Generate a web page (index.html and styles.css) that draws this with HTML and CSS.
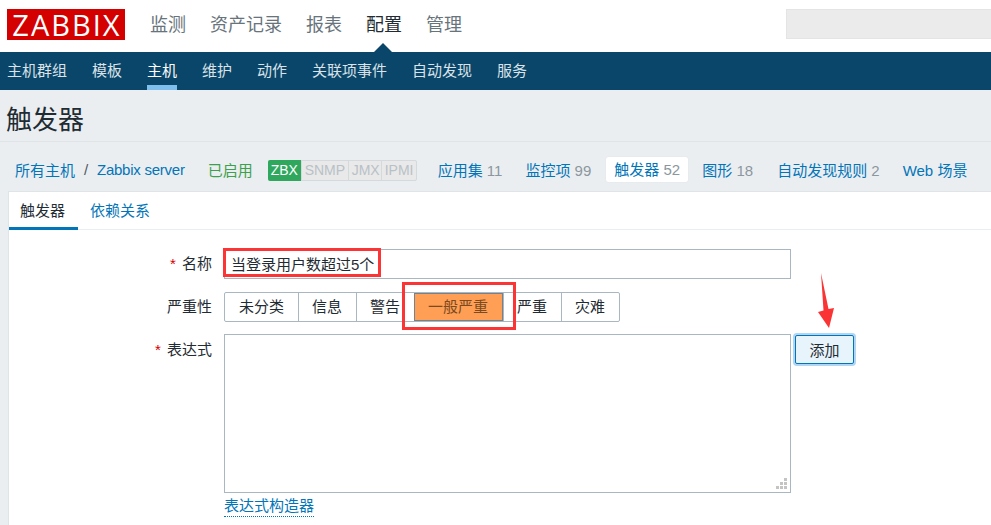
FILE: index.html
```html
<!DOCTYPE html>
<html lang="zh-CN">
<head>
<meta charset="utf-8">
<title>触发器</title>
<link rel="stylesheet" href="styles.css">
</head>
<body>
<header class="topbar">
  <a class="logo">ZABBIX</a>
  <nav class="mainnav">
    <a>监测</a><a>资产记录</a><a>报表</a><a class="is-current">配置</a><a>管理</a>
  </nav>
  <div class="search"></div>
</header>
<nav class="subnav">
  <a>主机群组</a><a>模板</a><a class="is-current">主机</a><a>维护</a><a>动作</a><a>关联项事件</a><a>自动发现</a><a>服务</a>
</nav>
<main class="page">
  <h1 class="title">触发器</h1>
  <div class="hostbar">
    <a class="link crumb">所有主机</a><span class="slash">/</span><a class="link crumb-host">Zabbix server</a>
    <span class="enabled">已启用</span>
    <span class="pills"><b class="pill pill-on">ZBX</b><b class="pill">SNMP</b><b class="pill">JMX</b><b class="pill">IPMI</b></span>
    <a class="link item item-apps">应用集 <i>11</i></a>
    <a class="link item item-items">监控项 <i>99</i></a>
    <a class="link item item-current">触发器 <i>52</i></a>
    <a class="link item item-graphs">图形 <i>18</i></a>
    <a class="link item item-rules">自动发现规则 <i>2</i></a>
    <a class="link item item-web">Web 场景</a>
  </div>
  <section class="panel">
    <div class="tabs">
      <a class="tab tab-on">触发器</a><a class="tab link">依赖关系</a>
    </div>
    <form class="form">
      <label class="label"><em>*</em> 名称</label>
      <div class="field name-field">当登录用户数超过5个</div>
      <label class="label">严重性</label>
      <div class="severity">
        <span class="sev">未分类</span><span class="sev">信息</span><span class="sev">警告</span><span class="sev sev-on">一般严重</span><span class="sev">严重</span><span class="sev">灾难</span>
      </div>
      <label class="label label-expr"><em>*</em> 表达式</label>
      <div class="expr-row">
        <div class="expr-col">
          <div class="field expr-box">
            <svg class="grip" width="12" height="12" viewBox="0 0 12 12"><path fill="#c4c4c4" d="M8 0h3v3H8zM8 4h3v3H8zM4 4h3v3H4zM8 8h3v3H8zM4 8h3v3H4zM0 8h3v3H0z"/></svg>
          </div>
          <a class="builder">表达式构造器</a>
        </div>
        <button class="add" type="button">添加</button>
      </div>
    </form>
  </section>
</main>
<!-- red callouts drawn on top of the form -->
<div class="mark mark-name"></div>
<div class="mark mark-sev"></div>
<svg class="arrow" width="20" height="58" viewBox="0 0 20 58"><path fill="#fa3434" d="M4 0 11.500 36 17 35 12 55 1 39 6.500 37.500Z"/></svg>
</body>
</html>
```
FILE: styles.css
```css
* { box-sizing: border-box; }
html, body { margin: 0; height: 525px; overflow: hidden; }
body {
  position: relative;
  background: #fff;
  font-family: "Liberation Sans", "Noto Sans CJK SC", sans-serif;
  font-size: 15px;
  color: #1f2c33;
}
a { text-decoration: none; }

.topbar { height: 52px; display: flex; align-items: flex-start; background: #fff; }
.logo {
  margin: 9px 0 0 7px;
  padding-left: 2px;
  width: 118px; height: 31px;
  background: #d40000; color: #fff;
  font: 400 29px/31px "Open Sans", sans-serif;
  text-align: center;
  letter-spacing: 2px;
}
.mainnav { display: flex; gap: 24px; margin: 14px 0 0 25px; font-size: 18px; line-height: 22px; color: #68747c; }
.mainnav .is-current { position: relative; color: #1f2c33; }
.mainnav .is-current::after {
  content: ""; position: absolute; left: 8px; top: 29px;
  border: 9px solid transparent; border-top: 0; border-bottom-color: #0a466a;
}
.search { margin: 9px 0 0 auto; width: 205px; height: 30px; background: #ebebeb; border: 1px solid #e4e4e4; border-right: 0; }

.subnav { height: 38px; display: flex; gap: 25px; padding-left: 7px; background: #0a466a; color: #dbe3e8; line-height: 38px; }
.subnav a { height: 38px; }
.subnav .is-current { color: #fff; border-bottom: 5px solid #7ebfed; }

.page { background: #ebeef1; height: 435px; }
.title { margin: 0; padding: 14px 0 0 6px; height: 52px; border-bottom: 1px solid #dfe4e7; font-size: 26px; font-weight: 400; line-height: 32px; color: #1f2c33; }
.link { color: #0275b8; }

.hostbar { display: flex; align-items: center; height: 49px; padding: 6px 0 0 15px; white-space: nowrap; }
.slash { margin: 0 0 0 9px; color: #4d5a62; width: 13px; }
.crumb-host { letter-spacing: -0.250px; }
.enabled { margin-left: 23px; color: #3da04c; }
.pills { display: flex; margin: 1px 0 0 15px; height: 21px; border: 1px solid #d3d9dd; border-radius: 2px; background: #e9e9e9; }
.pill { font-weight: 400; font-size: 14px; line-height: 19px; padding: 0 3px; color: #b8c1c7; border-left: 1px solid #d3d9dd; width: 33px; text-align: center; }
.pill:nth-child(2) { width: 47px; }
.pill:nth-child(4) { width: 35px; }
.pill-on { background: #2fa85e; color: #fff; border: 0; margin: -1px 0 -1px -1px; line-height: 21px; border-radius: 2px 0 0 2px; height: 21px; }
.item i { font-style: normal; color: #8b979e; }
.item-apps { margin-left: 21px; }
.item-items { margin-left: 23px; }
.item-current { margin-left: 15px; padding: 0 8px; width: 82px; height: 25px; line-height: 25px; background: #fff; border-radius: 2px; box-shadow: 0 0 1px #c9d0d5; }
.item-graphs { margin-left: 14px; }
.item-rules { margin-left: 24px; }
.item-web { margin-left: 23px; }

.panel { margin-left: 8px; height: 334px; background: #fff; border-top: 1px solid #dfe4e7; border-left: 1px solid #dfe4e7; }
.tabs { display: flex; height: 38px; border-bottom: 1px solid #ebeef1; }
.tab { height: 38px; line-height: 38px; padding: 0 12px 0 11px; }
.tab-on { width: 69px; border-bottom: 3px solid #0275b8; color: #1f2c33; }
.tab + .tab { padding-left: 12px; }

.form { display: grid; grid-template-columns: 203px auto; column-gap: 12px; row-gap: 13px; padding-top: 19px; }
.label { text-align: right; line-height: 30px; color: #1f2c33; }
.label-expr { margin-top: -1px; line-height: 32px; }
.label em { color: #d40000; font-style: normal; margin-right: 2px; }
.field { border: 1px solid #a9b7c2; background: #fff; }
.name-field { width: 567px; height: 30px; line-height: 30px; padding-left: 6px; }
.severity { display: flex; width: max-content; height: 30px; border: 1px solid #a9b7c2; border-radius: 2px; }
.sev { padding: 0 13.500px; line-height: 28px; border-left: 1px solid #a9b7c2; }
.sev:first-child { border-left: 0; padding-left: 14px; }
.sev-on { background: #ff9f55; color: #7b4a20; outline: 1px solid #76818a; outline-offset: -1px; border-left: 0; padding: 0 14.500px; }
.expr-row { display: flex; align-items: flex-start; margin-top: -1px; }
.expr-col { width: 567px; }
.expr-box { position: relative; height: 159px; }
.grip { position: absolute; right: 2px; bottom: 2px; }
.builder { display: inline-block; margin-top: 3px; line-height: 20px; color: #0275b8; border-bottom: 1px dotted #0275b8; }
.add {
  margin: 1px 0 0 4px; width: 59px; height: 29px; padding: 0;
  font: inherit; color: #1f2c33;
  background: #e8f4fc; border: 1px solid #0275b8; border-radius: 2px;
  box-shadow: 0 0 0 2px #b0d6f5;
}

.mark { position: absolute; border: 3px solid #fb3535; }
.mark-name { left: 223px; top: 248px; width: 158px; height: 29px; }
.mark-sev { left: 402px; top: 282px; width: 114px; height: 48px; }
.arrow { position: absolute; left: 817px; top: 273px; }
```
